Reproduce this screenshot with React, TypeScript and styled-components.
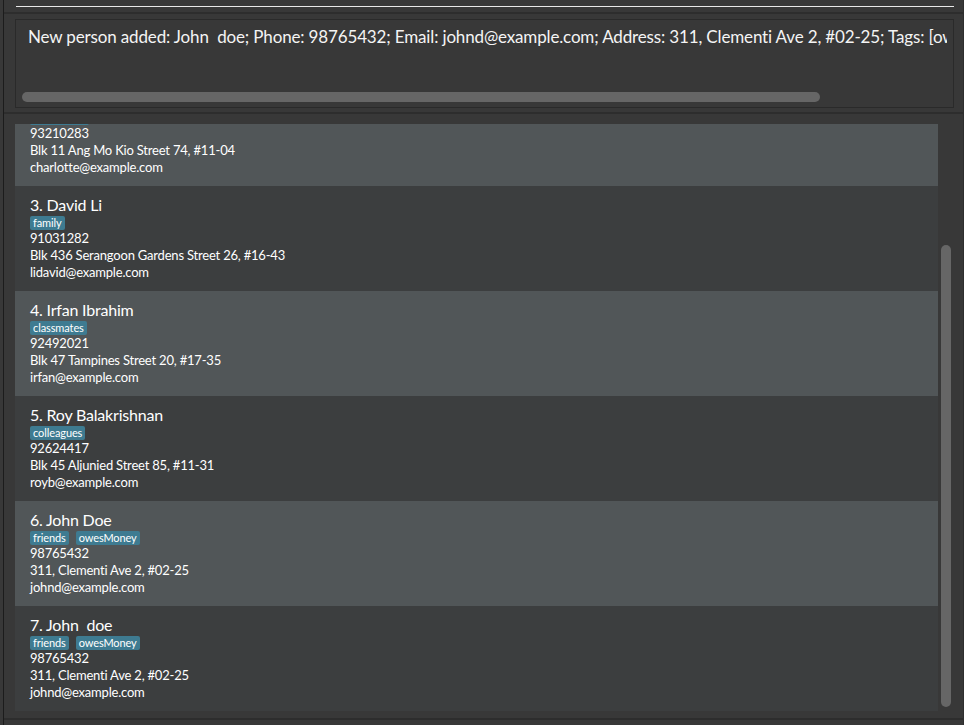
import styled, { createGlobalStyle } from "styled-components";

const GlobalStyle = createGlobalStyle`
  html, body {
    margin: 0;
    padding: 0;
    background: #383838;
    overflow: hidden;
  }
  * { box-sizing: border-box; }
`;

type Person = {
  name: string;
  tags: string[];
  phone: string;
  address: string;
  email: string;
};

const people: Person[] = [
  {
    name: "2. Charlotte Oliveiro",
    tags: ["neighbours"],
    phone: "93210283",
    address: "Blk 11 Ang Mo Kio Street 74, #11-04",
    email: "charlotte@example.com",
  },
  {
    name: "3. David Li",
    tags: ["family"],
    phone: "91031282",
    address: "Blk 436 Serangoon Gardens Street 26, #16-43",
    email: "lidavid@example.com",
  },
  {
    name: "4. Irfan Ibrahim",
    tags: ["classmates"],
    phone: "92492021",
    address: "Blk 47 Tampines Street 20, #17-35",
    email: "irfan@example.com",
  },
  {
    name: "5. Roy Balakrishnan",
    tags: ["colleagues"],
    phone: "92624417",
    address: "Blk 45 Aljunied Street 85, #11-31",
    email: "royb@example.com",
  },
  {
    name: "6. John Doe",
    tags: ["friends", "owesMoney"],
    phone: "98765432",
    address: "311, Clementi Ave 2, #02-25",
    email: "johnd@example.com",
  },
  {
    name: "7. John  doe",
    tags: ["friends", "owesMoney"],
    phone: "98765432",
    address: "311, Clementi Ave 2, #02-25",
    email: "johnd@example.com",
  },
];

const Frame = styled.div`
  margin-left: 3px;
  width: 961px;
  height: 725px;
  border-left: 1px solid #1c1c1c;
  border-right: 1px solid #2e2e2e;
  display: flex;
  flex-direction: column;
  font-family: Lato, "Noto Sans", sans-serif;
  color: #ffffff;
`;

const CommandArea = styled.div`
  height: 12px;
  padding: 6px 9px 0 12px;
`;

const CommandUnderline = styled.div`
  height: 1px;
  background: #e8e8e8;
`;

const Divider = styled.div`
  height: 2px;
  background: #2d2d2d;
  flex-shrink: 0;
`;

const ResultPane = styled.div`
  padding: 5px 9px 4px 11px;
`;

const ResultBox = styled.div`
  height: 89px;
  border: 1px solid #2a2a2a;
  padding: 0 6px;
  display: flex;
  flex-direction: column;
  overflow: hidden;
`;

const ResultText = styled.div`
  flex: 1;
  padding: 7px 0 0 6px;
  font-size: 17px;
  line-height: 20px;
  letter-spacing: -0.15px;
  white-space: pre;
  overflow: hidden;
  color: #f4f4f4;
`;

const HScrollThumb = styled.div`
  width: 798px;
  height: 10px;
  border-radius: 5px;
  background: #666666;
  margin-bottom: 5px;
`;

const ListPane = styled.div`
  flex: 1;
  padding: 10px 0 8px 11px;
  display: flex;
  gap: 3px;
  min-height: 0;
`;

const Viewport = styled.div`
  width: 923px;
  height: 587px;
  overflow: hidden;
`;

const Track = styled.div<{ $offset: number }>`
  transform: translateY(${({ $offset }) => -$offset}px);
`;

const Card = styled.div<{ $light: boolean }>`
  height: 105px;
  padding: 9px 15px 0;
  background: ${({ $light }) => ($light ? "#515658" : "#3c3e3f")};
`;

const Name = styled.div`
  font-size: 16px;
  line-height: 20px;
  letter-spacing: -0.2px;
  white-space: pre;
`;

const Tags = styled.div`
  display: flex;
  gap: 7px;
  margin-top: 1px;
  height: 14px;
`;

const Tag = styled.span`
  background: #3e7b91;
  border-radius: 2px;
  padding: 0 3px;
  font-size: 11px;
  line-height: 14px;
  letter-spacing: -0.1px;
  color: #ffffff;
`;

const Info = styled.div`
  font-size: 13px;
  line-height: 17px;
  letter-spacing: -0.2px;
  &:first-of-type {
    margin-top: 1px;
  }
`;

const ScrollColumn = styled.div`
  width: 10px;
  padding-top: 121px;
`;

const VScrollThumb = styled.div`
  width: 10px;
  height: 462px;
  border-radius: 5px;
  background: #666666;
`;

const Bottom = styled.div`
  height: 5px;
`;

function PersonCard({ person, light }: { person: Person; light: boolean }) {
  return (
    <Card $light={light}>
      <Name>{person.name}</Name>
      <Tags>
        {person.tags.map((t) => (
          <Tag key={t}>{t}</Tag>
        ))}
      </Tags>
      <Info>{person.phone}</Info>
      <Info>{person.address}</Info>
      <Info>{person.email}</Info>
    </Card>
  );
}

export default function App() {
  return (
    <>
      <GlobalStyle />
      <Frame>
        <CommandArea>
          <CommandUnderline />
        </CommandArea>
        <Divider />
        <ResultPane>
          <ResultBox>
            <ResultText>
              {
                "New person added: John  doe; Phone: 98765432; Email: johnd@example.com; Address: 311, Clementi Ave 2, #02-25; Tags: [owesMoney][friends]"
              }
            </ResultText>
            <HScrollThumb />
          </ResultBox>
        </ResultPane>
        <Divider />
        <ListPane>
          <Viewport>
            <Track $offset={43}>
              {people.map((p, i) => (
                <PersonCard key={p.name} person={p} light={i % 2 === 0} />
              ))}
            </Track>
          </Viewport>
          <ScrollColumn>
            <VScrollThumb />
          </ScrollColumn>
        </ListPane>
        <Divider />
        <Bottom />
      </Frame>
    </>
  );
}
